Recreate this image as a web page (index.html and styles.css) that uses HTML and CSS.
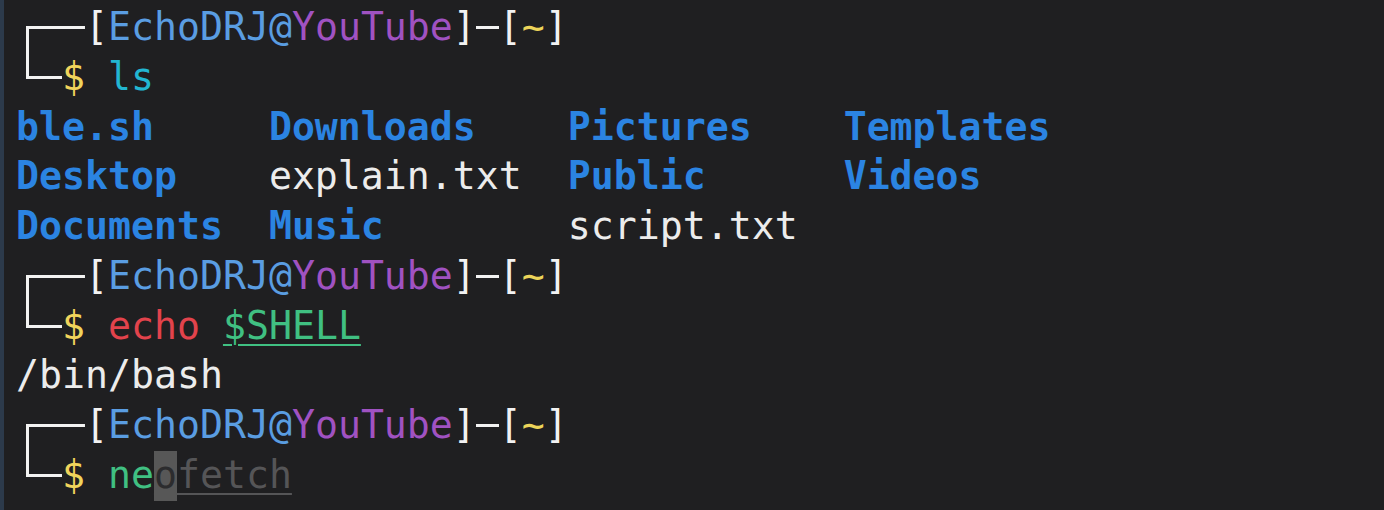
FILE: index.html
```html
<!DOCTYPE html>
<html>
<head>
<meta charset="utf-8">
<link rel="stylesheet" href="styles.css">
</head>
<body>
<div class="term">
  <div class="line"><span class="ct"></span><span class="br">[</span><span class="user">EchoDRJ@</span><span class="host">YouTube</span><span class="br">]</span><span class="dash"></span><span class="br">[</span><span class="dir">~</span><span class="br">]</span></div>
  <div class="line"><span class="cb"></span><span class="sym">$</span> <span class="c-ls">ls</span></div>
  <div class="ls">
    <span class="d">ble.sh</span>
    <span class="d">Desktop</span>
    <span class="d">Documents</span>
    <span class="d">Downloads</span>
    <span class="f">explain.txt</span>
    <span class="d">Music</span>
    <span class="d">Pictures</span>
    <span class="d">Public</span>
    <span class="f">script.txt</span>
    <span class="d">Templates</span>
    <span class="d">Videos</span>
  </div>
  <div class="line"><span class="ct"></span><span class="br">[</span><span class="user">EchoDRJ@</span><span class="host">YouTube</span><span class="br">]</span><span class="dash"></span><span class="br">[</span><span class="dir">~</span><span class="br">]</span></div>
  <div class="line"><span class="cb"></span><span class="sym">$</span> <span class="c-echo">echo</span> <span class="var">$SHELL</span></div>
  <div class="line out">/bin/bash</div>
  <div class="line"><span class="ct"></span><span class="br">[</span><span class="user">EchoDRJ@</span><span class="host">YouTube</span><span class="br">]</span><span class="dash"></span><span class="br">[</span><span class="dir">~</span><span class="br">]</span></div>
  <div class="line"><span class="cb"></span><span class="sym">$</span> <span class="c-neo">ne</span><span class="cur">o</span><span class="ghost">fetch</span></div>
</div>
</body>
</html>
```

FILE: styles.css
```css
html, body {
  margin: 0;
  padding: 0;
  background: #1f1f21;
  height: 100%;
  overflow: hidden;
}

body {
  border-left: 4px solid #2c3a4b;
  box-sizing: border-box;
}

.term {
  --lh: 49.75px;
  --bx: #f2f2f2;
  font-family: "DejaVu Sans Mono", "Liberation Mono", monospace;
  font-size: 38.2px;
  line-height: var(--lh);
  color: #ececec;
  padding: 3px 0 0 12px;
}

.line {
  height: var(--lh);
  white-space: pre;
}

.ct, .cb, .dash {
  display: inline-block;
  height: var(--lh);
  vertical-align: top;
  background-repeat: no-repeat;
}

.ct {
  width: 3ch;
  background-image: linear-gradient(var(--bx), var(--bx)), linear-gradient(var(--bx), var(--bx));
  background-size: calc(2.5ch + 1.5px) 3px, 3px calc(100% - 23px);
  background-position: right 0 top 23px, left calc(0.5ch - 1.5px) top 23px;
}

.cb {
  width: 2ch;
  background-image: linear-gradient(var(--bx), var(--bx)), linear-gradient(var(--bx), var(--bx));
  background-size: calc(1.5ch + 1.5px) 3px, 3px 26px;
  background-position: right 0 top 23px, left calc(0.5ch - 1.5px) top 0;
}

.dash {
  width: 1ch;
  background-image: linear-gradient(var(--bx), var(--bx));
  background-size: 100% 3px;
  background-position: left 0 top 23px;
}

.br { color: var(--bx); }
.user { color: #5a9de2; }
.host { color: #a052c2; }
.dir { color: #ecd45a; }
.sym { color: #f0d45c; }
.c-ls { color: #22b6d2; }
.c-echo { color: #e2434c; }
.var {
  color: #40c082;
  text-decoration: underline;
  text-decoration-thickness: 2px;
  text-underline-offset: 5px;
}
.c-neo { color: #40c082; }

.cur {
  display: inline-block;
  vertical-align: top;
  height: var(--lh);
  background: #575757;
  color: #2c2c2e;
  text-decoration: underline;
  text-decoration-color: #575757;
  text-decoration-thickness: 2px;
  text-underline-offset: 5px;
}

.ghost {
  color: #555557;
  text-decoration: underline;
  text-decoration-thickness: 2px;
  text-underline-offset: 5px;
}

.ls {
  display: grid;
  grid-template-rows: repeat(3, var(--lh));
  grid-template-columns: 11ch 13ch 12ch auto;
  grid-auto-flow: column;
  justify-content: start;
  white-space: pre;
}

.ls .d {
  color: #2b84e2;
  font-weight: bold;
}

.ls .f {
  color: #ececec;
}
```
